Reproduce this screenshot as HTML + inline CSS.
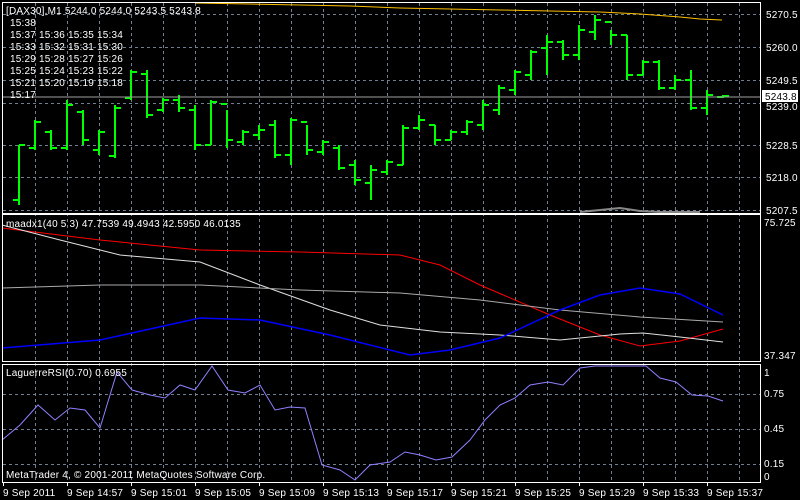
<!DOCTYPE html>
<html><head><meta charset="utf-8"><style>
html,body{margin:0;padding:0;background:#000;width:800px;height:500px;overflow:hidden}
svg{position:absolute;left:0;top:0}
text{font-family:"Liberation Sans",sans-serif;font-size:10px;fill:#fff;letter-spacing:0.2px}
</style></head><body>
<svg id="s" width="800" height="500" viewBox="0 0 800 500">
<g id="grid" stroke="#708090" stroke-dasharray="3,3" stroke-width="1"></g>
<g id="bars" stroke="#00ff00" stroke-width="2"></g>
<polyline fill="none" stroke="#ffc000" stroke-width="1" points="195,3 250,4 300,5 350,6 400,8 450,9 500,10 550,11 600,12 640,14 680,17 700,19 722,20"/>
<line x1="2" y1="97" x2="761" y2="97" stroke="#a0a0a0"/>
<polyline fill="none" stroke="#888" stroke-width="2" points="580,212 600,210 620,208 640,211 660,212 700,212"/>
<polyline fill="none" stroke="#ff0000" points="2,228 100,240 200,250 300,252 400,255 440,265 480,285 550,315 600,335 640,346 680,341 723,329"/>
<polyline fill="none" stroke="#e0e0e0" points="2,225 60,240 120,255 200,262 260,285 330,310 380,325 440,332 500,335 560,340 620,334 643,333 680,337 723,342"/>
<polyline fill="none" stroke="#aaaaaa" points="2,288 100,285 200,285 300,290 400,293 480,300 560,310 640,317 723,322"/>
<polyline fill="none" stroke="#0000ff" stroke-width="1.5" points="2,348 100,340 200,318 260,320 330,335 410,355 450,350 500,338 560,310 600,295 640,288 680,294 723,315"/>
<polyline fill="none" stroke="#9080ff" points="2,440 20,425 38,405 55,420 70,408 85,410 100,428 117,372 132,390 150,395 165,398 180,385 195,390 212,366 228,390 245,393 260,385 275,410 290,407 305,408 322,465 340,470 355,480 370,465 390,462 405,452 420,455 436,460 452,457 470,440 485,420 500,405 515,398 530,385 548,382 563,385 580,368 595,366 612,366 630,366 646,366 660,378 676,382 692,395 708,396 723,401"/>
<g fill="none" stroke="#fff" stroke-width="1">
<rect x="2.5" y="2.5" width="758" height="211"/>
<rect x="2.5" y="214.5" width="758" height="147"/>
<rect x="2.5" y="364.5" width="758" height="118"/>
</g>
<g id="ticks" stroke="#fff"></g>
<rect x="762" y="90" width="36" height="12" fill="#fff"/>
<text x="765" y="100" style="fill:#000">5243.8</text>
<text x="766" y="18">5270.5</text>
<text x="766" y="51">5260.0</text>
<text x="766" y="84">5249.5</text>
<text x="766" y="110">5239.0</text>
<text x="766" y="149">5228.5</text>
<text x="766" y="181">5218.0</text>
<text x="766" y="214">5207.5</text>
<text x="764" y="226">75.725</text>
<text x="764" y="359">37.347</text>
<text x="764" y="376">1</text>
<text x="764" y="397">0.75</text>
<text x="764" y="432">0.45</text>
<text x="764" y="467">0.15</text>
<text x="764" y="480">0</text>
<text x="6" y="14">[DAX30],M1  5244.0 5244.0 5243.5 5243.8</text>
<text x="10" y="26">15:38</text>
<text x="10" y="38">15:37 15:36 15:35 15:34</text>
<text x="10" y="50">15:33 15:32 15:31 15:30</text>
<text x="10" y="62">15:29 15:28 15:27 15:26</text>
<text x="10" y="74">15:25 15:24 15:23 15:22</text>
<text x="10" y="86">15:21 15:20 15:19 15:18</text>
<text x="10" y="98">15:17</text>
<text x="6" y="227">maadx1(40 5 3) 47.7539 49.4943 42.5950 46.0135</text>
<text x="6" y="376">LaguerreRSI(0.70) 0.6955</text>
<text x="6" y="478">MetaTrader 4, © 2001-2011 MetaQuotes Software Corp.</text>
<g id="tl"></g>
</svg>
<script>
var NS="http://www.w3.org/2000/svg";
function el(p,t,a,txt){var e=document.createElementNS(NS,t);for(var k in a)e.setAttribute(k,a[k]);if(txt)e.textContent=txt;p.appendChild(e);return e;}
var g=document.getElementById('grid');
for(var x=35;x<=740;x+=32){el(g,'line',{x1:x+.5,y1:3,x2:x+.5,y2:482});}
[14,47,80,103,145,177,210,394,429,464].forEach(function(y){el(g,'line',{x1:3,y1:y+.5,x2:761,y2:y+.5});});
var b=[[19,145,205,200,145],[35,120,150,148,122],[51,130,150,132,148],[67,100,150,148,105],[83,110,145,112,140],[99,130,155,150,132],[115,105,158,156,108],[131,70,100,98,72],[147,70,118,74,115],[163,98,112,110,100],[179,95,112,100,108],[195,105,150,110,145],[211,100,145,145,102],[227,110,148,104,140],[243,130,145,142,132],[259,125,140,135,130],[275,120,158,125,155],[291,118,165,155,120],[307,125,155,122,150],[323,140,155,152,142],[339,145,170,148,168],[355,160,185,165,180],[371,165,200,183,170],[387,160,175,172,162],[403,125,165,165,128],[419,115,130,128,120],[435,125,145,125,140],[451,130,140,140,132],[467,120,135,132,122],[483,100,130,125,105],[499,85,115,110,88],[515,70,95,90,72],[531,50,80,75,52],[547,35,75,48,42],[563,40,60,42,55],[579,25,60,55,30],[595,15,40,32,20],[611,30,45,22,35],[627,35,80,35,75],[643,60,75,75,62],[659,60,90,62,88],[675,75,90,88,80],[691,70,110,80,108],[707,90,115,108,95],[723,95,98,97,96]];
var bg=document.getElementById('bars');
b.forEach(function(c){el(bg,'line',{x1:c[0],y1:c[1],x2:c[0],y2:c[2]});el(bg,'line',{x1:c[0]-6,y1:c[3],x2:c[0],y2:c[3]});el(bg,'line',{x1:c[0],y1:c[4],x2:c[0]+6,y2:c[4]});});
var tl=document.getElementById('tl'),tk=document.getElementById('ticks');
var labs=['9 Sep 2011','9 Sep 14:57','9 Sep 15:01','9 Sep 15:05','9 Sep 15:09','9 Sep 15:13','9 Sep 15:17','9 Sep 15:21','9 Sep 15:25','9 Sep 15:29','9 Sep 15:33','9 Sep 15:37'];
labs.forEach(function(t,i){var x=3+i*64;el(tk,'line',{x1:x+.5,y1:482,x2:x+.5,y2:486});el(tl,'text',{x:x,y:496},t);});
</script>
</body></html>
